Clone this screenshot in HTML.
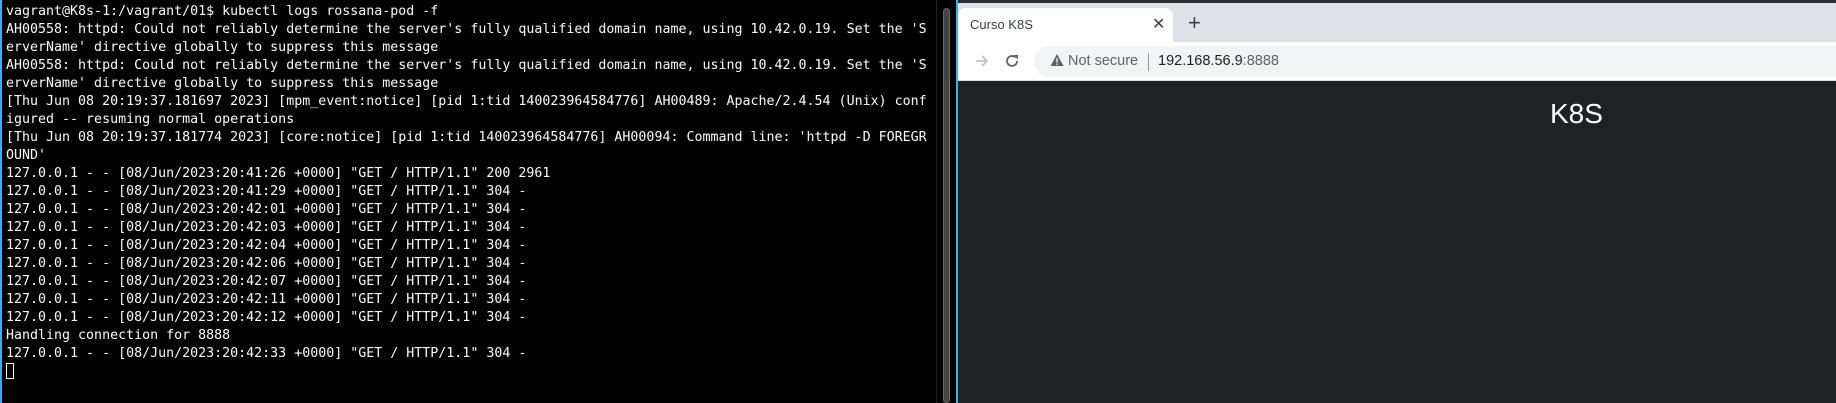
<!DOCTYPE html>
<html><head><meta charset="utf-8"><style>
*{margin:0;padding:0;box-sizing:border-box}
body{width:1836px;height:403px;overflow:hidden;background:#000;position:relative;font-family:"Liberation Sans",sans-serif}
#term{position:absolute;left:0;top:0;width:936px;height:403px;background:#000;border-left:2px solid #3daee9}
#term pre{position:absolute;left:4px;top:3px;font-family:"DejaVu Sans Mono",monospace;font-size:13.3px;line-height:18px;color:#fcfcfc;white-space:pre}
.cur{display:inline-block;width:8px;height:16px;border:1px solid #fcfcfc;vertical-align:-4px}
#sep{position:absolute;left:936px;top:0;width:1px;height:403px;background:#222}
#sb{position:absolute;left:943px;top:8px;width:7px;height:395px;background:#444;border-radius:4px;border:1px solid #666}
#blue{position:absolute;left:956px;top:0;width:2px;height:403px;background:#3daee9}
#br{position:absolute;left:958px;top:0;width:878px;height:403px;background:#202124}
#topbar{position:absolute;left:0;top:0;width:100%;height:3px;background:#2b2d30}
#tabs{position:absolute;left:0;top:3px;width:100%;height:39px;background:#dee1e6}
#tab{position:absolute;left:0;top:5px;width:215px;height:34px;background:#fff;border-radius:8px 8px 0 0}
#tab span{position:absolute;left:12px;top:9px;font-size:13px;color:#3c4043}
#tab b{position:absolute;left:194px;top:6px;font-weight:normal;font-size:16px;color:#3c4043}
#plus{position:absolute;left:230px;top:9px;font-size:22px;color:#3c4043;line-height:22px}
#tool{position:absolute;left:0;top:42px;width:100%;height:39px;background:#fff;border-bottom:1px solid #ddd}
#omni{position:absolute;left:76px;top:4px;width:820px;height:31px;background:#f1f3f4;border-radius:16px 0 0 16px}
#omni .w{position:absolute;left:16px;top:7px}
#omni .ns{position:absolute;left:34px;top:7px;font-size:14.5px;color:#5f6368}
#omni .d{position:absolute;left:114px;top:7px;width:1px;height:18px;background:#999}
#omni .u{position:absolute;left:124px;top:7px;font-size:14.5px;color:#202124}
#omni .u i{font-style:normal;color:#5f6368}
#k8s{position:absolute;left:592px;top:98px;font-size:28px;color:#fff}
</style></head><body>
<div id="term"><pre>vagrant@K8s-1:/vagrant/01$ kubectl logs rossana-pod -f
AH00558: httpd: Could not reliably determine the server's fully qualified domain name, using 10.42.0.19. Set the 'S
erverName' directive globally to suppress this message
AH00558: httpd: Could not reliably determine the server's fully qualified domain name, using 10.42.0.19. Set the 'S
erverName' directive globally to suppress this message
[Thu Jun 08 20:19:37.181697 2023] [mpm_event:notice] [pid 1:tid 140023964584776] AH00489: Apache/2.4.54 (Unix) conf
igured -- resuming normal operations
[Thu Jun 08 20:19:37.181774 2023] [core:notice] [pid 1:tid 140023964584776] AH00094: Command line: 'httpd -D FOREGR
OUND'
127.0.0.1 - - [08/Jun/2023:20:41:26 +0000] "GET / HTTP/1.1" 200 2961
127.0.0.1 - - [08/Jun/2023:20:41:29 +0000] "GET / HTTP/1.1" 304 -
127.0.0.1 - - [08/Jun/2023:20:42:01 +0000] "GET / HTTP/1.1" 304 -
127.0.0.1 - - [08/Jun/2023:20:42:03 +0000] "GET / HTTP/1.1" 304 -
127.0.0.1 - - [08/Jun/2023:20:42:04 +0000] "GET / HTTP/1.1" 304 -
127.0.0.1 - - [08/Jun/2023:20:42:06 +0000] "GET / HTTP/1.1" 304 -
127.0.0.1 - - [08/Jun/2023:20:42:07 +0000] "GET / HTTP/1.1" 304 -
127.0.0.1 - - [08/Jun/2023:20:42:11 +0000] "GET / HTTP/1.1" 304 -
127.0.0.1 - - [08/Jun/2023:20:42:12 +0000] "GET / HTTP/1.1" 304 -
Handling connection for 8888
127.0.0.1 - - [08/Jun/2023:20:42:33 +0000] "GET / HTTP/1.1" 304 -
<span class="cur"></span></pre></div>
<div id="sep"></div>
<div id="sb"></div>
<div id="blue"></div>
<div id="br">
  <div id="topbar"></div>
  <div id="tabs">
    <div id="tab"><span>Curso K8S</span><b>✕</b></div>
    <div id="plus">+</div>
  </div>
  <div id="tool">
    <svg style="position:absolute;left:16px;top:11px" width="16" height="16" viewBox="0 0 16 16"><path d="M2 8h11M8 3l5 5-5 5" stroke="#bbb" stroke-width="1.6" fill="none"/></svg>
    <svg style="position:absolute;left:46px;top:11px" width="16" height="16" viewBox="0 0 16 16"><path d="M13 8a5 5 0 1 1-1.5-3.6" stroke="#5f6368" stroke-width="1.8" fill="none"/><path d="M9.5 2h4.5v4.5z" fill="#5f6368"/></svg>
    <div id="omni">
      <svg class="w" width="14" height="14" viewBox="0 0 14 14"><path d="M7 1L13.5 13H0.5Z" fill="#5f6368"/><rect x="6.3" y="5" width="1.4" height="4.5" fill="#f1f3f4"/><rect x="6.3" y="10.5" width="1.4" height="1.4" fill="#f1f3f4"/></svg>
      <span class="ns">Not secure</span><span class="d"></span>
      <span class="u">192.168.56.9<i>:8888</i></span>
    </div>
  </div>
  <div id="k8s">K8S</div>
</div>
</body></html>
